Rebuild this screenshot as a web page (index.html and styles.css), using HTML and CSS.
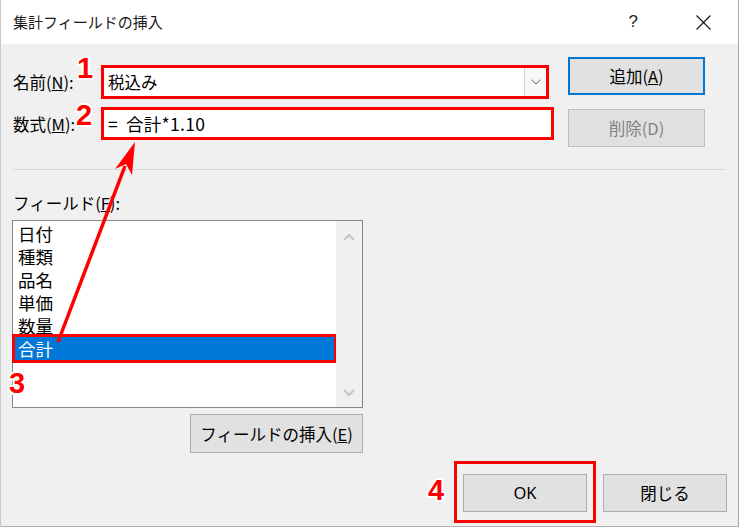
FILE: index.html
```html
<!DOCTYPE html>
<html lang="ja">
<head>
<meta charset="utf-8">
<title>集計フィールドの挿入</title>
<link rel="stylesheet" href="styles.css">
</head>
<body>
<div class="dialog">
  <div class="titlebar">
    <span class="title">集計フィールドの挿入</span>
    <span class="help">?</span>
    <svg class="close" width="15" height="15" viewBox="0 0 15 15"><path d="M0.5 0.5 L14.5 14.5 M14.5 0.5 L0.5 14.5" stroke="#111" stroke-width="1.1" fill="none"/></svg>
  </div>
  <div class="content">
    <div class="top">
      <div class="fields">
        <div class="row row-name">
          <span class="lbl">名前(<u>N</u>):</span>
          <div class="combo hl">
            <span class="val">税込み</span>
            <span class="drop"><svg width="10" height="6" viewBox="0 0 10 6"><path d="M0.5 0.8 L5 5 L9.5 0.8" stroke="#606060" stroke-width="1" fill="none"/></svg></span>
          </div>
        </div>
        <div class="row row-formula">
          <span class="lbl">数式(<u>M</u>):</span>
          <div class="textbox hl"><span class="val formula"><span class="eq">=</span>合計*1.10</span></div>
        </div>
      </div>
      <div class="side">
        <div class="btn btn-default">追加(<u>A</u>)</div>
        <div class="btn btn-disabled">削除(D)</div>
      </div>
    </div>
    <div class="sep"></div>
    <div class="fieldsec">
      <div class="flabel">フィールド(<u>F</u>):</div>
      <div class="listbox">
        <ul class="items">
          <li>日付</li>
          <li>種類</li>
          <li>品名</li>
          <li>単価</li>
          <li>数量</li>
          <li class="sel">合計</li>
        </ul>
        <div class="scroll">
          <svg width="12" height="8" viewBox="0 0 12 8"><path d="M1 7 L6 2 L11 7" stroke="#c4c4c4" stroke-width="2" fill="none"/></svg>
          <svg width="12" height="8" viewBox="0 0 12 8"><path d="M1 1 L6 6 L11 1" stroke="#c4c4c4" stroke-width="2" fill="none"/></svg>
        </div>
      </div>
      <div class="insert-row"><div class="btn btn-insert">フィールドの挿入(<u>E</u>)</div></div>
    </div>
    <div class="bottom">
      <div class="okwrap"><div class="btn btn-ok">OK</div></div>
      <div class="btn btn-close">閉じる</div>
    </div>
  </div>

  <svg class="arrow" width="739" height="527" viewBox="0 0 739 527">
    <line x1="58" y1="342" x2="125" y2="166" stroke="#ff0000" stroke-width="3.5"/>
    <polygon points="135,142 115,169 126,164 132,175" fill="#ff0000"/>
  </svg>
  <span class="badge b1">1</span>
  <span class="badge b2">2</span>
  <span class="badge b3">3</span>
  <span class="badge b4">4</span>
</div>
</body>
</html>
```

FILE: styles.css
```css
* { box-sizing: border-box; }
html, body { margin: 0; padding: 0; background: #ffffff; }
body {
  font-family: "Noto Sans CJK JP", "Noto Sans", sans-serif;
  color: #000;
}
.dialog {
  position: relative;
  width: 739px;
  height: 527px;
  overflow: hidden;
  border-right: 1px solid #a8a8a8;
  border-left: 1px solid #c8c8c8;
  background: #f0f0f0;
}
.titlebar {
  height: 44px;
  background: #fff;
  display: flex;
  align-items: center;
}
.title {
  padding-left: 12px;
  font-size: 15px;
  line-height: 20px;
  color: #1a1a1a;
}
.help {
  margin-left: auto;
  font-family: "Liberation Sans", sans-serif;
  font-size: 17px;
  line-height: 20px;
  color: #222;
  margin-right: 58px;
}
.close { margin-right: 27px; }
.content {
  height: 483px;
  background: #f0f0f0;
  border-bottom: 1px solid #b0b0b0;
}
.top {
  display: flex;
  padding-left: 11px;
}
.fields { width: 542px; }
.row { display: flex; align-items: center; }
.row-name { margin-top: 21px; height: 34px; }
.row-formula { margin-top: 8px; height: 33px; }
.lbl {
  width: 89px;
  padding-left: 1px;
  font-size: 16.5px;
  line-height: 20px;
  white-space: nowrap;
}
.hl {
  border: 3px solid #ff0000;
  background: #fff;
  display: flex;
  align-items: center;
  height: 100%;
}
.combo { width: 448px; }
.textbox { width: 453px; }
.val {
  padding-left: 4px;
  font-size: 16.5px;
  line-height: 20px;
  white-space: nowrap;
}
.formula {
  font-size: 17.5px;
  letter-spacing: 0.3px;
}
.eq { margin-right: 8px; }
.drop {
  margin-left: auto;
  width: 22px;
  height: 100%;
  border-left: 1px solid #cfcfcf;
  background: #f7f7f7;
  display: flex;
  align-items: center;
  justify-content: center;
}
.side {
  margin-left: 14px;
  display: flex;
  flex-direction: column;
}
.btn {
  display: flex;
  align-items: center;
  justify-content: center;
  background: #e1e1e1;
  border: 1px solid #adadad;
  font-size: 16.5px;
  line-height: 20px;
  color: #000;
  white-space: nowrap;
}
.side .btn { width: 137px; height: 38px; }
.btn-default { margin-top: 13px; border: 2px solid #0078d7; }
.btn-disabled {
  margin-top: 14px;
  color: #838383;
  border-color: #bfbfbf;
  background: #e0e0e0;
}
.sep {
  margin: 22px 12px 0 12px;
  height: 1px;
  background: #d9d9d9;
}
.fieldsec {
  padding-left: 11px;
  width: 362px;
}
.flabel {
  margin-top: 23px;
  padding-left: 1px;
  font-size: 16.5px;
  line-height: 20px;
}
.listbox {
  margin-top: 7px;
  width: 351px;
  height: 188px;
  border: 1px solid #828790;
  background: #fff;
  display: flex;
}
.items {
  flex: 1;
  margin: 0;
  padding: 1px 0 0 0;
  list-style: none;
}
.items li {
  height: 23px;
  line-height: 23px;
  padding-left: 5px;
  font-size: 17.5px;
}
.items li.sel {
  margin: 0 2px;
  padding-left: 3px;
  background: #0078d7;
  color: #fff;
  outline: 3px solid #ff0000;
}
.scroll {
  width: 26px;
  background: #f0f0f0;
  display: flex;
  flex-direction: column;
  justify-content: space-between;
  align-items: center;
  padding: 12px 0 10px 0;
}
.insert-row {
  display: flex;
  justify-content: flex-end;
  margin-top: 6px;
  width: 351px;
}
.btn-insert { width: 173px; height: 39px; }
.bottom {
  display: flex;
  justify-content: flex-end;
  align-items: flex-start;
  margin-top: 8px;
  padding-right: 11px;
}
.okwrap {
  border: 3px solid #ff0000;
  padding: 10px 6px 8px 6px;
}
.btn-ok, .btn-close { width: 124px; height: 38px; }
.btn-ok { font-family: "Noto Sans", sans-serif; }
.btn-close { margin-left: 7px; margin-top: 13px; }
.arrow {
  position: absolute;
  left: -1px;
  top: 0;
  pointer-events: none;
}
.badge {
  position: absolute;
  font-family: "Liberation Sans", Arial, sans-serif;
  font-weight: bold;
  font-size: 29px;
  line-height: 28px;
  color: #ff0000;
  text-shadow:
    2px 0 0 #fff, -2px 0 0 #fff, 0 2px 0 #fff, 0 -2px 0 #fff,
    1.5px 1.5px 0 #fff, -1.5px 1.5px 0 #fff, 1.5px -1.5px 0 #fff, -1.5px -1.5px 0 #fff;
}
.b1 { left: 76px; top: 54px; }
.b2 { left: 75px; top: 101px; }
.b3 { left: 8px; top: 369px; }
.b4 { left: 427px; top: 476px; }
```
